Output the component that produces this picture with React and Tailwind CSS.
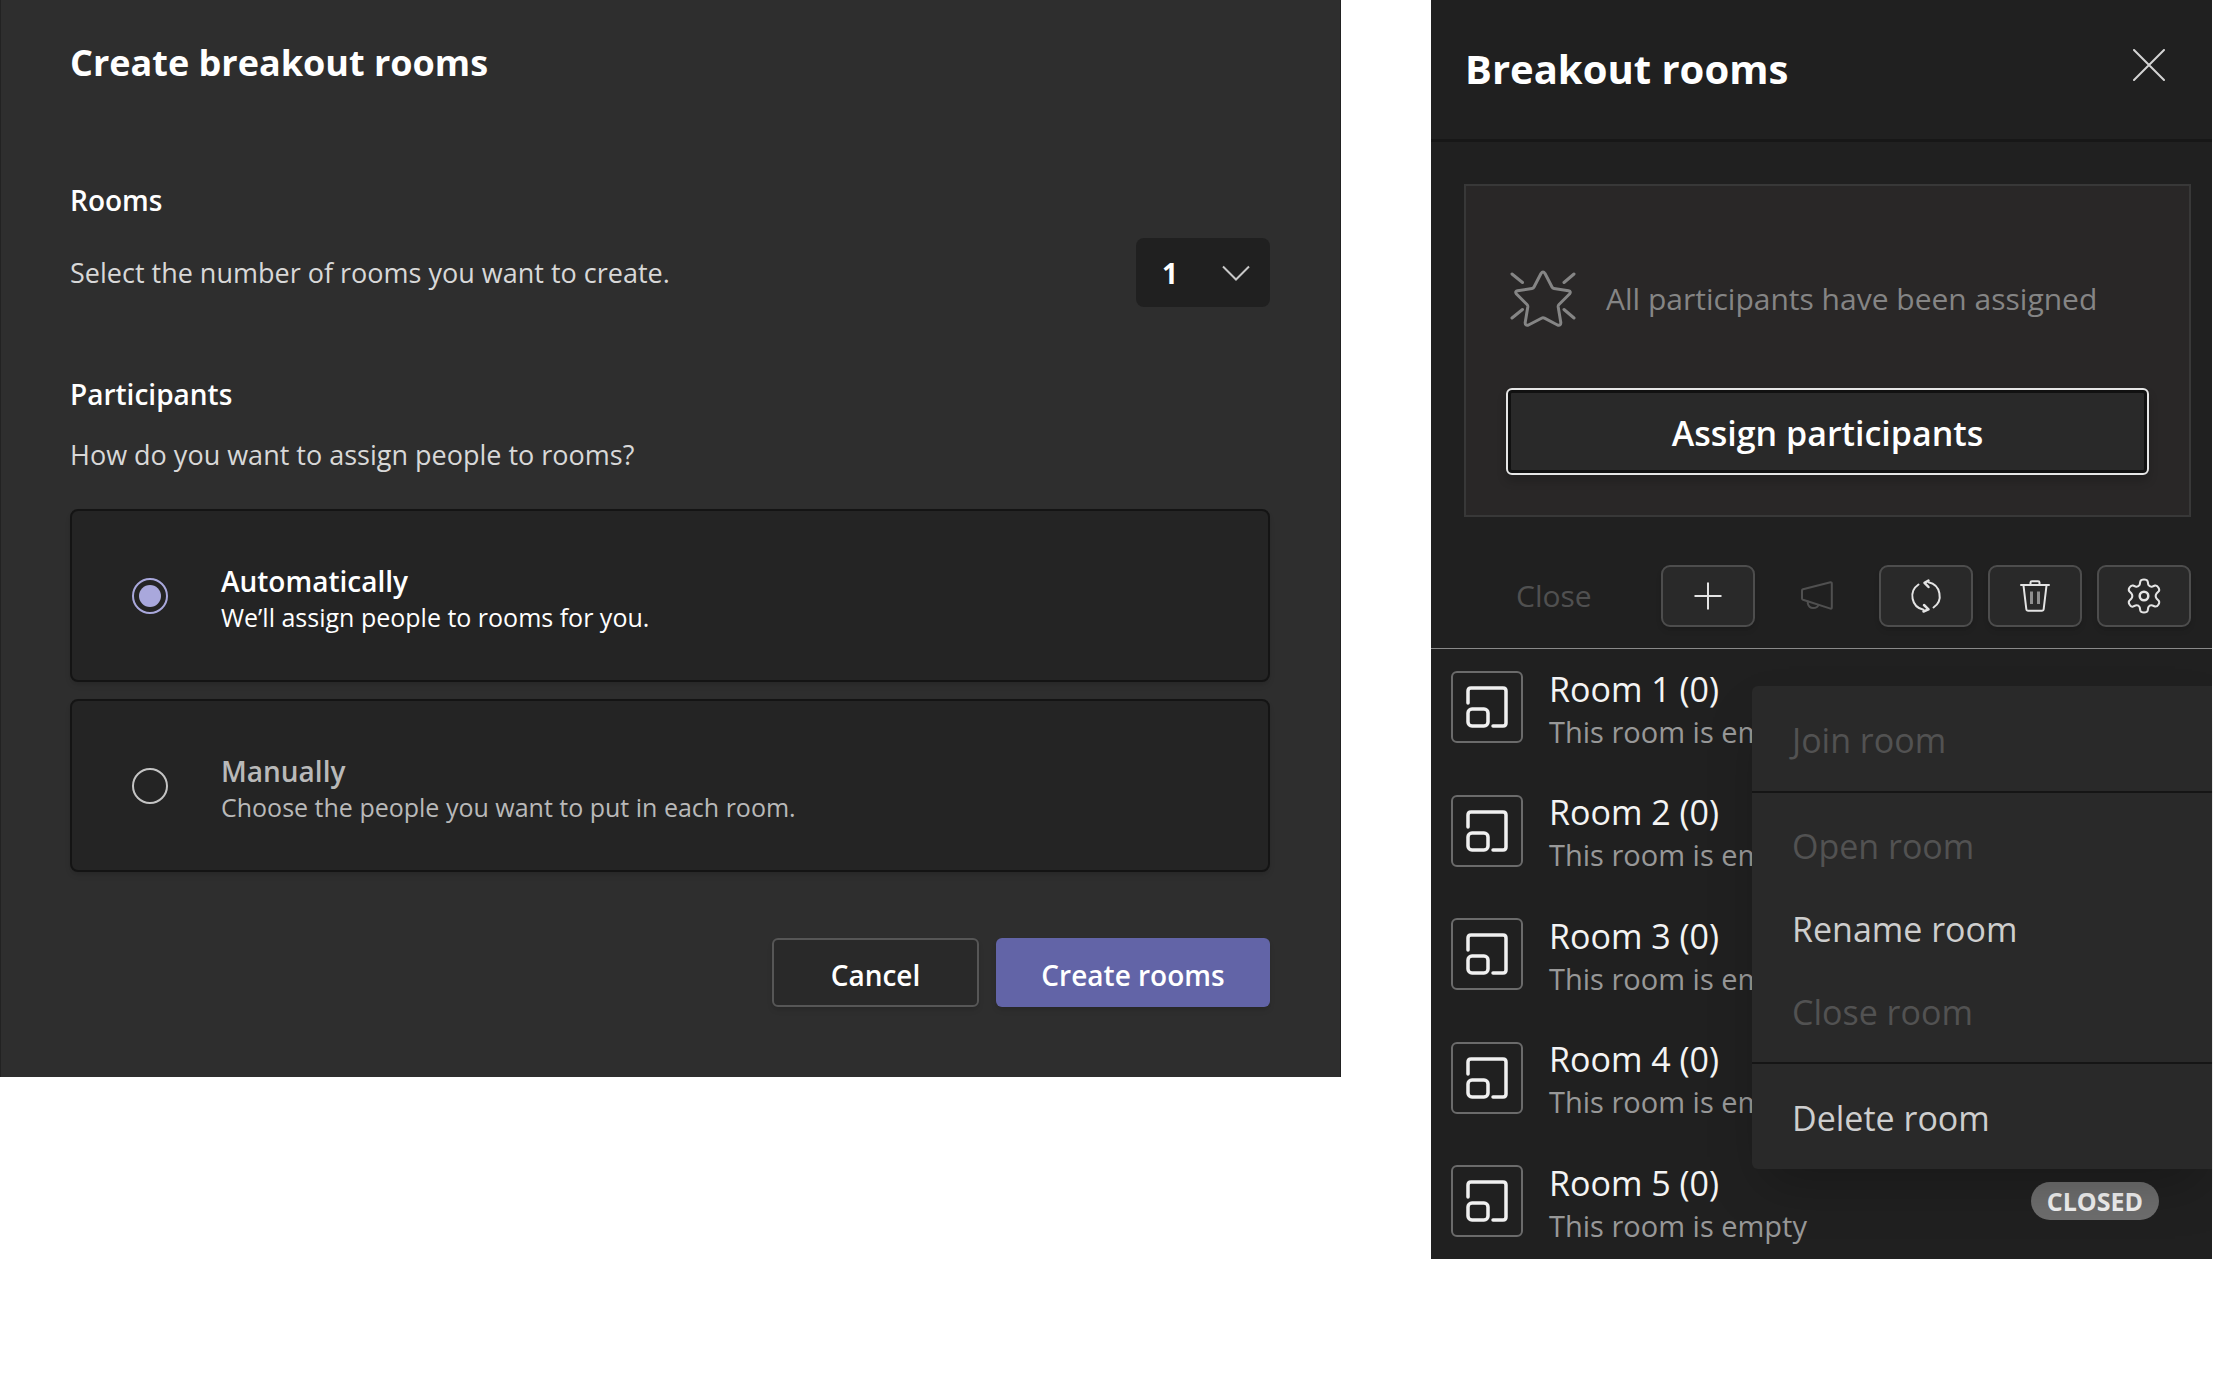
import React, { useState } from "react";

const stroke = { fill: "none", stroke: "currentColor", strokeLinecap: "round", strokeLinejoin: "round" };

function ChevronIcon() {
  return (
    <svg viewBox="0 0 28 16" className="h-4 w-7" {...stroke} strokeWidth="2" strokeLinecap="butt" strokeLinejoin="miter" aria-hidden="true">
      <path d="M1 1.5 14 14.5 27 1.5" />
    </svg>
  );
}

function CloseIcon() {
  return (
    <svg viewBox="0 0 32 32" className="size-8" {...stroke} strokeWidth="2" aria-hidden="true">
      <path d="M1 1 31 31M31 1 1 31" />
    </svg>
  );
}

function StarIcon() {
  return (
    <svg viewBox="0 0 66 58" className="h-[58px] w-[66px]" {...stroke} strokeWidth="3" aria-hidden="true">
      <path d="M31 3.500Q33 .5 35 3.500L42 17Q42.600 18.300 44 18.500L58.500 20.700Q61.500 21.500 59.500 24L49 34.500Q48 35.500 48.200 37L50.800 52.500Q51 56 47.500 55L34.500 48.200Q33 47.400 31.500 48.200L18.500 55Q15 56 15.200 52.500L17.800 37Q18 35.500 17 34.500L6.500 24Q4.500 21.500 7.500 20.700L22 18.500Q23.400 18.300 24 17Z" />
      <path d="M2 4 12.500 12.500M64 4 54 12.500M2 48 12.500 39.500M64 48 54 39.500" />
    </svg>
  );
}

function PlusIcon() {
  return (
    <svg viewBox="0 0 36 36" className="size-9" {...stroke} strokeWidth="2" strokeLinecap="butt" aria-hidden="true">
      <path d="M18 4.500V31.500M4.500 18H31.500" />
    </svg>
  );
}

function MegaphoneIcon() {
  return (
    <svg viewBox="0 0 36 36" className="size-9" {...stroke} strokeWidth="2" aria-hidden="true">
      <path d="M3 12.500Q3 11.500 4 11.200L31.500 4.300Q32.800 4.200 32.800 5.500V29.500Q32.800 31 31.500 30.600L4 21.800Q3 21.400 3 20.500Z" />
      <path d="M8.800 23.500V25.500Q10 30 14 30Q18.500 30 19.500 27" />
    </svg>
  );
}

function ShuffleIcon() {
  return (
    <svg viewBox="0 0 36 36" className="size-9" {...stroke} strokeWidth="2" aria-hidden="true">
      <path d="M10.500 6.500A14 14 0 0 0 15.500 31.800" />
      <path d="M25.500 29.500A14 14 0 0 0 20.500 4.200" />
      <path d="M20.500 2.500 16.500 4.800 20.500 9M15.500 33.500 20.500 31.400 16 27" strokeWidth="2.500" />
    </svg>
  );
}

function TrashIcon() {
  return (
    <svg viewBox="0 0 36 36" className="size-9" {...stroke} strokeWidth="2" aria-hidden="true">
      <path d="M4 7H32M13.500 6.500V4.500Q13.500 3.200 15 3.200H21Q22.500 3.200 22.500 4.500V6.500" />
      <path d="M6.500 7.500 9.300 31Q9.500 32.800 11.300 32.800H24.700Q26.500 32.800 26.700 31L29.500 7.500" />
      <path d="M14.500 13.500V26M21.500 13.500V26" strokeWidth="3" opacity=".55" strokeLinecap="butt" />
    </svg>
  );
}

function GearIcon() {
  return (
    <svg viewBox="0 0 36 36" className="size-9" {...stroke} strokeWidth="2" aria-hidden="true">
      <path d="M14.300 3.500Q14.800 1.500 18 1.500T21.700 3.500L22.300 6.800Q23.800 9.200 26.500 8.500L29 7.500Q31 7 32.500 9.700T32.500 13.500L30.500 15.500Q28.800 18 30.500 20.500L32.500 22.500Q34 24 32.500 26.500T29 28.500L26.500 27.500Q23.800 26.800 22.300 29.200L21.700 32.500Q21.200 34.500 18 34.500T14.300 32.500L13.700 29.200Q12.200 26.800 9.500 27.500L7 28.500Q5 29.200 3.500 26.500T3.500 22.500L5.500 20.500Q7.200 18 5.500 15.500L3.500 13.500Q2 12 3.500 9.500T7 7.500L9.500 8.500Q12.200 9.200 13.700 6.800Z" />
      <circle cx="18" cy="18" r="4.300" strokeWidth="2.500" />
    </svg>
  );
}

function RoomIcon() {
  return (
    <svg viewBox="0 0 42 42" className="size-[42px]" {...stroke} strokeWidth="3.500" aria-hidden="true">
      <path d="M2 17V5Q2 2 5 2H37Q40 2 40 5V37Q40 40 37 40H27" />
      <rect x="2" y="23" width="20" height="17" rx="4" />
    </svg>
  );
}

function AssignOption({ value, title, detail, checked, onChange }) {
  return (
    <label
      className={`flex h-[173px] cursor-pointer items-center rounded-lg border-2 border-[#141414] bg-[#242424] pl-15 shadow-md ${
        checked ? "text-white" : "text-[#b9b9b9]"
      }`}
    >
      <input
        type="radio"
        name="assignment"
        value={value}
        checked={checked}
        onChange={onChange}
        className="grid size-9 shrink-0 appearance-none place-items-center rounded-full border-2 border-[#c4c4c4] checked:border-[#a9a8dc] checked:before:size-[22px] checked:before:rounded-full checked:before:bg-[#a9a8dc]"
      />
      <span className="flex flex-col pt-1.5 pl-[53px]">
        <span className="text-[28px] leading-9 font-semibold">{title}</span>
        <span className="text-[25px] leading-9">{detail}</span>
      </span>
    </label>
  );
}

function CreateDialog() {
  const [mode, setMode] = useState("auto");
  return (
    <section aria-labelledby="create-title" className="border-x border-[#222222] bg-[#2e2e2e] pt-[37px] pr-[70px] pb-[70px] pl-[69px] text-white">
      <h1 id="create-title" className="text-[36px] leading-[52px] font-bold">Create breakout rooms</h1>

      <h2 className="mt-[91px] text-[28px] leading-10 font-semibold">Rooms</h2>
      <div className="mt-[18px] flex items-center justify-between">
        <label htmlFor="room-count" className="text-[27px] leading-10 text-[#d8d8d8]">
          Select the number of rooms you want to create.
        </label>
        <div className="relative w-[134px]">
          <select id="room-count" defaultValue="1" className="h-[69px] w-full appearance-none rounded-lg bg-[#202020] pl-[26px] text-[28px] font-bold">
            {[1, 2, 3, 4, 5].map((n) => (
              <option key={n}>{n}</option>
            ))}
          </select>
          <span className="pointer-events-none absolute inset-y-0 right-5 flex items-center text-[#c8c8c8]">
            <ChevronIcon />
          </span>
        </div>
      </div>

      <h2 className="mt-[67px] text-[28px] leading-10 font-semibold">Participants</h2>
      <p className="mt-[21px] text-[27px] leading-10 text-[#d8d8d8]">How do you want to assign people to rooms?</p>

      <div role="radiogroup" aria-label="Participants" className="mt-[34px] flex flex-col gap-[17px]">
        <AssignOption value="auto" title="Automatically" detail="We’ll assign people to rooms for you." checked={mode === "auto"} onChange={() => setMode("auto")} />
        <AssignOption value="manual" title="Manually" detail="Choose the people you want to put in each room." checked={mode === "manual"} onChange={() => setMode("manual")} />
      </div>

      <div className="mt-[66px] flex justify-end gap-[17px] text-[28px] font-semibold">
        <button type="button" className="h-[69px] w-[207px] rounded-md border-2 border-[#565656] bg-[#292929] pt-1 shadow-md">Cancel</button>
        <button type="button" className="h-[69px] w-[274px] rounded-md bg-[#6264a7] pt-1 shadow-md">Create rooms</button>
      </div>
    </section>
  );
}

function ToolButton({ label, children }) {
  return (
    <button
      type="button"
      aria-label={label}
      className="flex h-[62px] w-[94px] items-center justify-center rounded-[9px] border-2 border-[#4d4d4d] bg-[#292929] text-[#e4e4e4] shadow-md"
    >
      {children}
    </button>
  );
}

function RoomRow({ number }) {
  return (
    <li className="flex h-[72px] items-center pr-[53px] pl-5">
      <span className="flex size-[72px] shrink-0 items-center justify-center rounded-md border-2 border-[#6b6b6b] text-[#f0f0f0]">
        <RoomIcon />
      </span>
      <span className="flex flex-col pt-1.5 pl-[26px]">
        <span className="text-[34px] leading-[42px] text-[#f4f4f4]">Room {number} (0)</span>
        <span className="text-[29px] leading-[43px] text-[#989898]">This room is empty</span>
      </span>
      <span className="ml-auto rounded-full bg-[#6e6e6e] px-4 text-[25px] leading-[38px] font-bold text-[#f2f2f2]">CLOSED</span>
    </li>
  );
}

function MenuItem({ children, disabled }) {
  return (
    <button type="button" role="menuitem" disabled={disabled} className="block h-[83px] w-full pt-1 pl-10 text-left text-[34px] text-[#cecece] disabled:text-[#525252]">
      {children}
    </button>
  );
}

function RoomMenu() {
  return (
    <div role="menu" aria-label="Room options" className="absolute top-[37px] right-0 left-[321px] divide-y-2 divide-[#151515] rounded-l-md bg-[#292929] shadow-2xl">
      <div className="py-[11px]">
        <MenuItem disabled>Join room</MenuItem>
      </div>
      <div className="py-2.5">
        <MenuItem disabled>Open room</MenuItem>
        <MenuItem>Rename room</MenuItem>
        <MenuItem disabled>Close room</MenuItem>
      </div>
      <div className="py-[11px]">
        <MenuItem>Delete room</MenuItem>
      </div>
    </div>
  );
}

function RoomsPanel() {
  return (
    <aside aria-labelledby="rooms-title" className="bg-[#202020] text-white">
      <header className="flex items-start justify-between border-b-3 border-[#171717] pt-[41px] pr-[47px] pb-[43px] pl-[34px]">
        <h1 id="rooms-title" className="text-[40px] leading-[55px] font-bold">Breakout rooms</h1>
        <button type="button" aria-label="Close panel" className="mt-2 text-[#d4d4d4]">
          <CloseIcon />
        </button>
      </header>

      <div className="mt-[42px] mr-[21px] ml-[33px] border-2 border-[#383838] bg-[#292727] px-10 pt-[84px] pb-10">
        <div className="flex items-center gap-[30px] pl-1 text-[#858585]">
          <StarIcon />
          <p className="text-[30px] leading-10">All participants have been assigned</p>
        </div>
        <button
          type="button"
          className="mt-[60px] h-[87px] w-full rounded-md border-2 border-[#e6e6e6] bg-[#292929] pt-1 text-[34px] font-semibold shadow-[inset_0_0_0_3px_#111111,0_6px_10px_#00000030]"
        >
          Assign participants
        </button>
      </div>

      <div role="toolbar" aria-label="Room actions" className="mt-12 flex items-center justify-between pr-[21px] pb-[21px] pl-[85px]">
        <button type="button" disabled className="text-[30px] leading-10 text-[#505050]">Close</button>
        <div className="flex items-center gap-[15px]">
          <ToolButton label="Add room"><PlusIcon /></ToolButton>
          <button type="button" disabled aria-label="Make an announcement" className="flex h-[62px] w-[94px] items-center justify-center text-[#505050]">
            <MegaphoneIcon />
          </button>
          <ToolButton label="Reassign participants"><ShuffleIcon /></ToolButton>
          <ToolButton label="Delete rooms"><TrashIcon /></ToolButton>
          <ToolButton label="Settings"><GearIcon /></ToolButton>
        </div>
      </div>

      <div className="relative border-t border-[#8a8a8a]">
        <ul className="flex h-[610px] flex-col justify-between py-[22px]">
          {[1, 2, 3, 4, 5].map((n) => (
            <RoomRow key={n} number={n} />
          ))}
        </ul>
        <RoomMenu />
      </div>
    </aside>
  );
}

export default function App() {
  return (
    <main className="grid grid-cols-[1341fr_781fr] items-start gap-[90px] bg-white pr-px font-['Open_Sans',sans-serif]">
      <CreateDialog />
      <RoomsPanel />
    </main>
  );
}
